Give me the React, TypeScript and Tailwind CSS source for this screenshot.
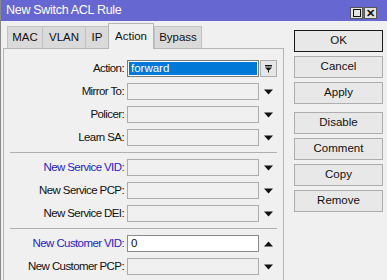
import React from "react";

const fields = [
  { label: "Action:", kind: "selected", value: "forward" },
  { label: "Mirror To:" },
  { label: "Policer:" },
  { label: "Learn SA:" },
  { sep: true },
  { label: "New Service VID:", blue: true },
  { label: "New Service PCP:" },
  { label: "New Service DEI:" },
  { sep: true },
  { label: "New Customer VID:", blue: true, kind: "white", value: "0", up: true },
  { label: "New Customer PCP:" },
];

const tabs = [
  { name: "MAC", w: "w-[36px]" },
  { name: "VLAN", w: "w-[44px]" },
  { name: "IP", w: "w-[24px]" },
  { name: "Action", w: "w-[46px]", active: true },
  { name: "Bypass", w: "w-[48px]" },
];

function DownArrow() {
  return (
    <svg width="9" height="6" viewBox="0 0 9 6">
      <path d="M0 0.5 H9 L4.5 5.5 Z" fill="#111" />
    </svg>
  );
}

function UpArrow() {
  return (
    <svg width="9" height="6" viewBox="0 0 9 6">
      <path d="M0 5.5 H9 L4.5 0.5 Z" fill="#111" />
    </svg>
  );
}

function ComboButton() {
  return (
    <div className="flex h-[17px] w-[17px] items-center justify-center border border-[#adadad] bg-[#e6e6e6]">
      <svg width="9" height="9" viewBox="0 0 9 9">
        <rect x="1" y="1" width="7" height="1.4" fill="#111" />
        <path d="M1 3.5 H8 L4.5 7 Z" fill="#111" />
        <rect x="4" y="6.5" width="1" height="2" fill="#111" />
      </svg>
    </div>
  );
}

export default function App() {
  return (
    <div className="h-[280px] w-[387px] overflow-hidden border-l border-[#8a8a8a] bg-[#f0f0f0] text-[11.5px] text-[#111] [font-family:'Liberation_Sans',Arial,sans-serif]">
      <div className="flex h-[21px] items-center justify-between bg-[#6767d2] pl-[5px] pr-[10px]">
        <span className="text-[12.5px] tracking-[-0.3px] text-white">New Switch ACL Rule</span>
        <div className="flex gap-[1px] pt-[5px]">
          <div className="flex h-[12px] w-[13px] items-center justify-center border border-[#555] bg-[#e4e4e4]">
            <div className="h-[8px] w-[8px] border border-[#111]" />
          </div>
          <div className="flex h-[12px] w-[13px] items-center justify-center border border-[#555] bg-[#e4e4e4] text-[11px] font-bold leading-none">
            ✕
          </div>
        </div>
      </div>

      <div className="flex">
        <div className="ml-[2px] w-[281px]">
          <div className="flex h-[27px] items-end pl-[4px]">
            {tabs.map((t) =>
              t.active ? (
                <div key={t.name} className={`relative z-10 -mb-px flex h-[26px] items-start justify-center border border-b-0 border-[#b5b5b5] bg-[#f0f0f0] pt-[4px] ${t.w}`}>
                  {t.name}
                </div>
              ) : (
                <div key={t.name} className={`-mr-px flex h-[22px] items-center justify-center border border-b-0 border-[#c2c2c2] bg-[#dadada] ${t.w}`}>
                  {t.name}
                </div>
              )
            )}
          </div>
          <div className="flex h-[240px] flex-col gap-[6px] border border-[#b5b5b5] pt-[11px]">
            {fields.map((f, i) =>
              f.sep ? (
                <div key={i} className="mx-[6px] h-px bg-[#b0b0b0]" />
              ) : (
                <div key={i} className="flex h-[17px] items-center">
                  <div className={`w-[120px] text-right tracking-[-0.6px] ${f.blue ? "text-[#2424c8]" : ""}`}>{f.label}</div>
                  {f.kind === "selected" ? (
                    <div className="ml-[3px] h-[17px] w-[132px] border border-[#7a7a7a] bg-white p-px">
                      <div className="h-full bg-[#0078d7] pl-[2px] leading-[13px] text-white">{f.value}</div>
                    </div>
                  ) : f.kind === "white" ? (
                    <div className="ml-[3px] h-[17px] w-[132px] border border-[#8a8a8a] bg-white pl-[3px] leading-[15px]">{f.value}</div>
                  ) : (
                    <div className="ml-[3px] h-[17px] w-[132px] border border-[#adadad] bg-[#f0f0f0]" />
                  )}
                  <div className="flex w-[19px] items-center justify-center">
                    {f.kind === "selected" ? <ComboButton /> : f.up ? <UpArrow /> : <DownArrow />}
                  </div>
                </div>
              )
            )}
          </div>
        </div>

        <div className="ml-[10px] flex w-[89px] flex-col gap-[4px] pt-[9px]">
          <button className="h-[22px] border border-[#1a1a1a] bg-[#e8e8e8]">OK</button>
          <button className="h-[22px] border border-[#adadad] bg-[#e8e8e8]">Cancel</button>
          <button className="h-[22px] border border-[#adadad] bg-[#e8e8e8]">Apply</button>
          <button className="mt-[4px] h-[22px] border border-[#adadad] bg-[#e8e8e8]">Disable</button>
          <button className="h-[22px] border border-[#adadad] bg-[#e8e8e8]">Comment</button>
          <button className="h-[22px] border border-[#adadad] bg-[#e8e8e8]">Copy</button>
          <button className="h-[22px] border border-[#adadad] bg-[#e8e8e8]">Remove</button>
        </div>
      </div>
    </div>
  );
}
